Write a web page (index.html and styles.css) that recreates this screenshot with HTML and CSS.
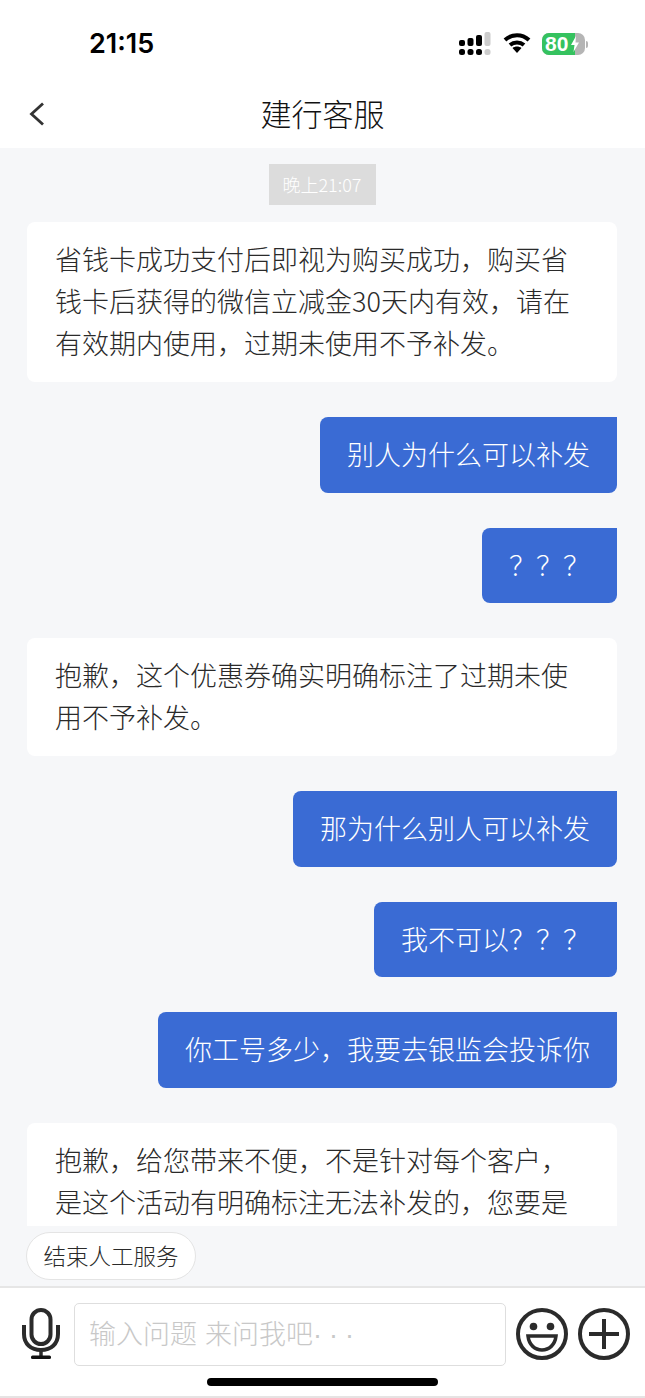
FILE: index.html
```html
<!DOCTYPE html>
<html lang="zh-CN">
<head>
  <meta charset="UTF-8">
  <meta name="viewport" content="width=device-width, initial-scale=1.0">
  <title>建行客服</title>
  <link rel="stylesheet" href="styles.css">
</head>
<body>
  <div class="app">
    <div class="status-bar">
      <span class="clock">21:15</span>
      <div class="status-icons">
        <svg class="signal" width="34" height="24" viewBox="0 0 34 24">
          <rect x="1" y="8" width="6" height="6" rx="2" fill="#000"/>
          <rect x="9.500" y="6" width="6" height="8" rx="2" fill="#000"/>
          <rect x="18" y="3" width="6" height="11" rx="2" fill="#000"/>
          <rect x="26.500" y="0" width="6" height="14" rx="2" fill="#ccc"/>
          <rect x="1" y="17" width="6" height="6" rx="2.500" fill="#000"/>
          <rect x="9.500" y="17" width="6" height="6" rx="2.500" fill="#000"/>
          <rect x="18" y="17" width="6" height="6" rx="2.500" fill="#000"/>
          <rect x="26.500" y="17" width="6" height="6" rx="2.500" fill="#ccc"/>
        </svg>
        <svg class="wifi" width="28" height="22" viewBox="0 0 28 22">
          <path d="M2 8 C9 1.500 19 1.500 26 8" fill="none" stroke="#000" stroke-width="4"/>
          <path d="M7 13 C11 9.500 17 9.500 21 13" fill="none" stroke="#000" stroke-width="4"/>
          <path d="M9.500 16 C12 14 16 14 18.500 16 L14 21 Z" fill="#000"/>
        </svg>
        <div class="battery">
          <div class="battery-fill"><span>80</span></div>
          <svg class="bolt" width="10" height="16" viewBox="0 0 10 16"><path d="M6 0 L1 9 H4.500 L3.500 16 L9 6.500 H5.500 Z" fill="#fff"/></svg>
          <i class="battery-cap"></i>
        </div>
      </div>
    </div>

    <div class="nav-bar">
      <svg class="back" width="18" height="24" viewBox="0 0 18 24"><path d="M15 1.500 L3.500 12 L15 22.500" fill="none" stroke="#333" stroke-width="2.800"/></svg>
      <h1>建行客服</h1>
    </div>

    <div class="chat">
      <div class="time-chip">晚上21:07</div>
      <div class="msg msg-in">省钱卡成功支付后即视为购买成功，购买省钱卡后获得的微信立减金30天内有效，请在有效期内使用，过期未使用不予补发。</div>
      <div class="msg msg-out">别人为什么可以补发</div>
      <div class="msg msg-out">？？？</div>
      <div class="msg msg-in">抱歉，这个优惠券确实明确标注了过期未使用不予补发。</div>
      <div class="msg msg-out">那为什么别人可以补发</div>
      <div class="msg msg-out">我不可以？？？</div>
      <div class="msg msg-out">你工号多少，我要去银监会投诉你</div>
      <div class="msg msg-in">抱歉，给您带来不便，不是针对每个客户，是这个活动有明确标注无法补发的，您要是</div>
    </div>

    <div class="quick-bar">
      <button class="quick-btn">结束人工服务</button>
    </div>

    <div class="input-bar">
      <svg class="mic" width="40" height="52" viewBox="0 0 40 52">
        <rect x="10.500" y="2" width="19" height="34" rx="9.500" fill="none" stroke="#2b2b2b" stroke-width="4"/>
        <path d="M3 17 V26 C3 36 10 42 20 42 C30 42 37 36 37 26 V17" fill="none" stroke="#2b2b2b" stroke-width="4"/>
        <path d="M20 42 V49" stroke="#2b2b2b" stroke-width="3.500"/>
        <rect x="10" y="47.500" width="20" height="3.500" rx="1.500" fill="#111"/>
      </svg>
      <div class="text-input">输入问题 来问我吧<span class="dots">···</span></div>
      <svg class="round-icon" width="52" height="52" viewBox="0 0 52 52">
        <circle cx="26" cy="26" r="24" fill="none" stroke="#2b2b2b" stroke-width="4"/>
        <circle cx="17.500" cy="18.500" r="3.800" fill="#2b2b2b"/>
        <circle cx="34.500" cy="18.500" r="3.800" fill="#2b2b2b"/>
        <path d="M12 28 H40 C39 37 33 42 26 42 C19 42 13 37 12 28 Z" fill="none" stroke="#2b2b2b" stroke-width="3.500"/>
      </svg>
      <svg class="round-icon" width="52" height="52" viewBox="0 0 52 52">
        <circle cx="26" cy="26" r="24" fill="none" stroke="#2b2b2b" stroke-width="4"/>
        <path d="M26 11 V41 M11 26 H41" stroke="#2b2b2b" stroke-width="4"/>
      </svg>
    </div>

    <div class="home-area"><i class="home-bar"></i></div>
  </div>
</body>
</html>
```

FILE: styles.css
```css
* {
  box-sizing: border-box;
}
html, body {
  margin: 0;
  padding: 0;
}
body {
  font-family: "Noto Sans CJK SC", "Liberation Sans", sans-serif;
  font-weight: 300;
  background-color: #fff;
  color: #333;
}
.app {
  width: 645px;
  height: 1398px;
  display: flex;
  flex-direction: column;
  overflow: hidden;
}
.status-bar {
  height: 80px;
  flex: none;
  display: flex;
  justify-content: space-between;
  align-items: flex-start;
  padding: 27px 60px 0 89px;
}
.clock {
  font-family: Inter, "Liberation Sans", sans-serif;
  font-size: 27px;
  line-height: 34px;
  font-weight: 600;
  color: #000;
}
.status-icons {
  display: flex;
  align-items: center;
  gap: 11px;
  padding-top: 5px;
}
.wifi {
  margin-top: -2px;
}
.battery {
  width: 43px;
  height: 22px;
  display: flex;
  background-color: #b5b5b5;
  border-radius: 7px;
  position: relative;
}
.battery-fill {
  width: 33px;
  background-color: #35c25f;
  border-radius: 7px 0 0 7px;
  color: #fff;
  font-family: "Liberation Sans", sans-serif;
  font-size: 21px;
  font-weight: 700;
  line-height: 22px;
  padding-left: 3px;
}
.bolt {
  position: absolute;
  left: 28px;
  top: 3px;
}
.battery-cap {
  position: absolute;
  right: -3px;
  top: 8px;
  width: 2px;
  height: 7px;
  background-color: #b5b5b5;
  border-radius: 0 2px 2px 0;
}
.nav-bar {
  height: 68px;
  flex: none;
  display: flex;
  align-items: center;
  justify-content: center;
  padding-bottom: 4px;
  position: relative;
}
.nav-bar h1 {
  margin: 0;
  font-size: 31px;
  font-weight: 300;
  color: #111;
}
.back {
  position: absolute;
  left: 28px;
  top: 22px;
}
.chat {
  height: 1078px;
  flex: none;
  overflow: hidden;
  background-color: #f6f7f9;
  padding: 16px 28px 0 27px;
  display: flex;
  flex-direction: column;
  align-items: flex-start;
  gap: 35px;
}
.time-chip {
  align-self: center;
  width: 107px;
  height: 41px;
  margin-bottom: -18px;
  flex: none;
  background-color: #dcdcdc;
  color: #fff;
  font-size: 18px;
  line-height: 41px;
  text-align: center;
}
.msg {
  flex: none;
  font-size: 27px;
  line-height: 42px;
  border-radius: 8px;
}
.msg-in {
  width: 590px;
  padding: 16px 28px 18px;
  background-color: #fff;
  color: #2a2a2a;
}
.msg-out {
  align-self: flex-end;
  padding: 16px 27px 17.600px;
  background-color: #3a6bd4;
  color: #fff;
  border-top-right-radius: 0;
}
.quick-bar {
  height: 62px;
  flex: none;
  background-color: #f6f7f9;
  padding: 6px 26px 0;
  border-bottom: 2px solid #e6e6e6;
}
.quick-btn {
  display: block;
  width: 170px;
  height: 48px;
  padding: 0 0 3px;
  background-color: #fff;
  border: 1px solid #e4e4e4;
  border-radius: 24px;
  font-family: inherit;
  font-weight: inherit;
  font-size: 22.500px;
  color: #2a2a2a;
}
.input-bar {
  height: 78px;
  flex: none;
  display: flex;
  align-items: flex-start;
  padding: 20px 15px 0 21px;
}
.text-input {
  width: 432px;
  height: 63px;
  margin: -5px 10px 0 13px;
  border: 1px solid #dedede;
  border-radius: 5px;
  padding-left: 14px;
  color: #c8c8c8;
  font-size: 27px;
  line-height: 58px;
  word-spacing: 2px;
}
.dots {
  font-family: "Liberation Sans", sans-serif;
  letter-spacing: 7px;
}
.round-icon {
  flex: none;
}
.round-icon + .round-icon {
  margin-left: 10px;
}
.home-area {
  flex: 1;
  position: relative;
  border-bottom: 2px solid #e6e3e3;
}
.home-bar {
  position: absolute;
  left: 207px;
  top: 12px;
  width: 231px;
  height: 8px;
  background-color: #000;
  border-radius: 4px;
}
```
